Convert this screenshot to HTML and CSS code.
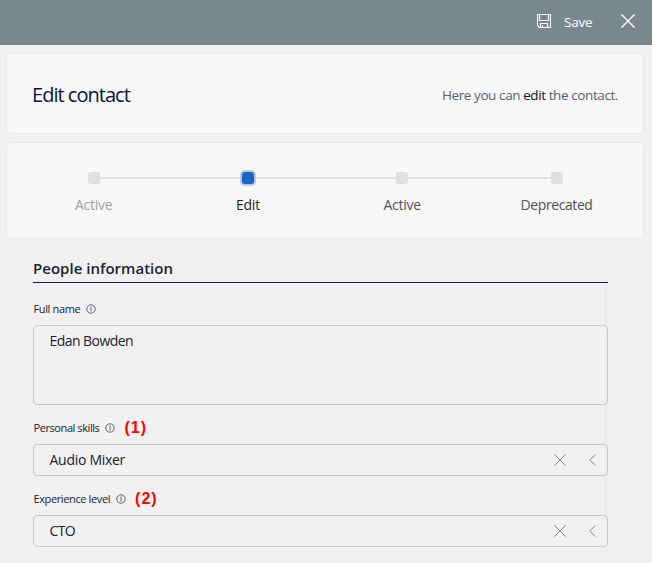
FILE: index.html
```html
<!DOCTYPE html>
<html lang="en">
<head>
<meta charset="utf-8">
<title>Edit contact</title>
<link rel="stylesheet" href="styles.css">
</head>
<body>
<header class="toolbar">
  <button class="save">
    <svg width="16" height="16" viewBox="0 0 16 16" fill="none" stroke="#fff" stroke-width="1.1"><path d="M1.500 1.500h13v13h-11l-2-2zM3.500 1.500v6h9v-6M4.500 14.500v-4h7v4M6.500 12v2.500"/></svg>
    <span class="save-text">Save</span>
  </button>
  <button class="close" aria-label="Close"><svg width="14" height="14" viewBox="0 0 14 14" stroke="#fff" stroke-width="1.3"><path d="M.5.5l13 13M13.500.5l-13 13"/></svg></button>
</header>
<section class="card title-card">
  <h1>Edit contact</h1>
  <p class="hint">Here you can <b>edit</b> the contact.</p>
</section>
<section class="card steps">
  <div class="step done"><i class="mark"></i><span>Active</span></div>
  <div class="step current"><i class="mark"></i><span>Edit</span></div>
  <div class="step"><i class="mark"></i><span>Active</span></div>
  <div class="step"><i class="mark"></i><span class="long">Deprecated</span></div>
</section>
<main class="form">
  <h2><span>People information</span></h2>
  <div class="label"><span class="name-label">Full name</span>
    <svg class="info" viewBox="0 0 10 10"><circle cx="5" cy="5" r="4.200"/><path d="M5 2.500v5"/></svg></div>
  <div class="field area"><span class="value name">Edan Bowden</span></div>
  <div class="label"><span class="skills-label">Personal skills</span>
    <svg class="info" viewBox="0 0 10 10"><circle cx="5" cy="5" r="4.200"/><path d="M5 2.500v5"/></svg><strong>(1)</strong></div>
  <div class="field"><span class="value mixer">Audio Mixer</span>
    <svg class="clear" viewBox="0 0 12 12"><path d="M.3.3l11.400 11.400M11.700.3L.3 11.700"/></svg>
    <svg class="chevron" viewBox="0 0 7 12"><path d="M6.600.3L.7 6l5.900 5.700"/></svg></div>
  <div class="label"><span class="level-label">Experience level</span>
    <svg class="info" viewBox="0 0 10 10"><circle cx="5" cy="5" r="4.200"/><path d="M5 2.500v5"/></svg><strong>(2)</strong></div>
  <div class="field"><span class="value cto">CTO</span>
    <svg class="clear" viewBox="0 0 12 12"><path d="M.3.3l11.400 11.400M11.700.3L.3 11.700"/></svg>
    <svg class="chevron" viewBox="0 0 7 12"><path d="M6.600.3L.7 6l5.900 5.700"/></svg></div>
  <div class="edge"></div>
</main>
</body>
</html>
```
FILE: styles.css
```css
* { box-sizing: border-box; }
body { margin: 0; height: 563px; overflow: hidden; background: #f1f1f1; color: #1b2330; font: 14px/20px "Open Sans", "Noto Sans", sans-serif; }
svg { display: block; flex: none; }
button { display: flex; align-items: center; padding: 0; border: 0; background: none; color: #fff; font: inherit; }
.toolbar { height: 45px; display: flex; justify-content: flex-end; align-items: center; padding: 0 17px 3px 0; background: #7b878f; }
.save { width: 85px; gap: 12px; font-size: 13.5px; }
.save-text { padding-top: 2px; letter-spacing: -.2px; }
.close { height: 20px; }
.card { width: 638px; margin: 8px 0 0 6px; border: 1px solid #eaeaea; border-radius: 5px; background: #f8f8f8; }
.title-card { height: 81px; display: flex; align-items: center; justify-content: space-between; padding: 2px 25px 0; }
h1 { margin: 0; font-size: 20px; line-height: 28px; font-weight: 400; letter-spacing: -.98px; color: #0b1238; }
.hint { margin: 0; font-size: 13.5px; letter-spacing: -.41px; color: #596070; }
.hint b { font-weight: 400; color: #10152b; }
.steps { height: 97px; display: grid; grid-template-columns: repeat(4, 154.3px); padding: 29px 0 0 9.5px; }
.step { position: relative; display: flex; flex-direction: column; align-items: center; gap: 11px; color: #505357; letter-spacing: -.25px; }
.step:not(:last-child)::before { content: ""; position: absolute; top: 5px; left: 50%; width: 100%; height: 2px; background: #e0e0e0; }
.mark { position: relative; width: 12px; height: 12px; border-radius: 3px; background: #dfe0e1; z-index: 1; }
.done { color: #a0a2a5; }
.current { color: #1e2125; }
.current .mark { background: #1b66c0; box-shadow: 0 0 0 2px #b3cae6; }
.long { letter-spacing: -.42px; }
.form { position: relative; width: 575px; margin-left: 33px; padding-top: 18px; }
h2 { height: 26px; margin: 0 0 15px; border-bottom: 1px solid #142033; font-size: 15px; line-height: 22px; font-weight: 600; letter-spacing: .02px; }
.label { height: 22px; display: flex; align-items: center; font-size: 11px; padding-left: .5px; }
.info { width: 10px; height: 10px; margin: -1px 0 0 6px; fill: none; stroke: #5e646b; stroke-width: 1; }
.label strong { margin-left: 9px; color: #f00; font: 700 16px/20px "Liberation Sans", Arial, sans-serif; letter-spacing: 1px; }
.field { height: 32px; display: flex; align-items: center; padding: 0 11px 0 15.5px; margin: 5px 0 12px; border: 1px solid #c9cacc; border-radius: 4px; }
.area { height: 80px; align-items: flex-start; padding-top: 5px; }
.name-label { letter-spacing: -.36px; }
.skills-label { letter-spacing: -.42px; }
.level-label { letter-spacing: -.38px; }
.value { margin-right: auto; letter-spacing: -.28px; }
.name { letter-spacing: -.55px; }
.cto { letter-spacing: -.6px; }
.clear { width: 12px; height: 12px; fill: none; stroke: #747b82; stroke-width: .9; }
.chevron { width: 7px; height: 12px; margin-left: 23px; fill: none; stroke: #747b82; stroke-width: .9; }
.edge { position: absolute; right: 1px; top: 44px; width: 4px; height: 239px; background: linear-gradient(to right, transparent, rgba(0, 0, 0, .035)); }
```
